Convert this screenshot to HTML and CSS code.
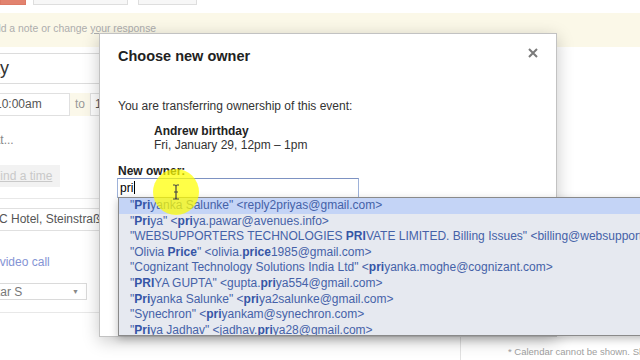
FILE: index.html
```html
<!DOCTYPE html>
<html>

<head>
    <title>Choose new owner</title>
    <link rel="stylesheet" href="styles.css">
</head>

<body>
    <div class="page">
        <div class="top-buttons">
            <span class="btn btn-red"></span>
            <span class="btn btn-save"></span>
            <span class="btn btn-more"></span>
        </div>

        <div class="notice">
            <span class="notice-text">Add a note or change <u>your response</u></span>
        </div>

        <div class="content">
            <div class="form-column">
                <div class="title-input">Andrew birthday</div>
                <div class="time-row">
                    <span class="time-input">10:00am</span>
                    <span class="time-to">to</span>
                    <span class="time-input">11:00am</span>
                </div>
                <div class="repeat">Repeat...</div>
                <div class="find-time">Find a time</div>
                <div class="divider"></div>
                <div class="location-input">ABC Hotel, Steinstraße 11, Düsseldorf</div>
                <div class="video-call">Add video call</div>
                <div class="calendar-select">
                    <span>Omkar S</span>
                    <span class="arrow">▼</span>
                </div>
                <div class="divider divider-bottom"></div>
            </div>

            <div class="calendar-column">
                <div class="calendar-note">* Calendar cannot be shown. Sharing settings do not allow it.</div>
            </div>
        </div>

        <!-- Transfer ownership dialog -->
        <div class="dialog">
            <h2 class="dialog-title">Choose new owner</h2>
            <span class="dialog-close">
                <svg width="10" height="10" viewBox="0 0 10 10">
                    <path d="M1 1 L9 9 M9 1 L1 9" stroke="#7a7a7a" stroke-width="2" />
                </svg>
            </span>

            <p class="intro">You are transferring ownership of this event:</p>
            <div class="event-info">
                <div class="event-name">Andrew birthday</div>
                <div>Fri, January 29, 12pm – 1pm</div>
            </div>

            <label class="owner-label" for="new-owner">New owner:</label>
            <div class="owner-input" id="new-owner">pri<span class="caret"></span></div>

            <div class="suggestions">
                <div class="suggestion selected">"<b>Pri</b>yanka Salunke" &lt;reply2priyas@gmail.com&gt;</div>
                <div class="suggestion">"<b>Pri</b>ya" &lt;<b>pri</b>ya.pawar@avenues.info&gt;</div>
                <div class="suggestion">"WEBSUPPORTERS TECHNOLOGIES <b>PRI</b>VATE LIMITED. Billing Issues" &lt;billing@websupporters.in&gt;</div>
                <div class="suggestion">"Olivia <b>Price</b>" &lt;olivia.<b>price</b>1985@gmail.com&gt;</div>
                <div class="suggestion">"Cognizant Technology Solutions India Ltd" &lt;<b>pri</b>yanka.moghe@cognizant.com&gt;</div>
                <div class="suggestion">"<b>PRI</b>YA GUPTA" &lt;gupta.<b>pri</b>ya554@gmail.com&gt;</div>
                <div class="suggestion">"<b>Pri</b>yanka Salunke" &lt;<b>pri</b>ya2salunke@gmail.com&gt;</div>
                <div class="suggestion">"Synechron" &lt;<b>pri</b>yankam@synechron.com&gt;</div>
                <div class="suggestion">"<b>Pri</b>ya Jadhav" &lt;jadhav.<b>pri</b>ya28@gmail.com&gt;</div>
            </div>
        </div>

        <!-- Highlighted mouse pointer -->
        <div class="cursor-spot">
            <svg width="8" height="16" viewBox="0 0 8 16">
                <path d="M1 1 H3 Q4 1 4 3 V13 Q4 15 3 15 H1 M7 1 H5 Q4 1 4 3 M4 13 Q4 15 5 15 H7 M2 8 H6" stroke="#444" stroke-width="1.2" fill="none" />
            </svg>
        </div>
    </div>
</body>

</html>
```

FILE: styles.css
```css
body {
    margin: 0;
    padding: 0;
    background: #fff;
    font-family: "Liberation Sans", Arial, sans-serif;
}

.page {
    position: relative;
    width: 640px;
    height: 360px;
    overflow: hidden;
    display: flex;
    flex-direction: column;
}

/* Background: event edit page */

.top-buttons {
    display: flex;
    height: 13px;
    flex-shrink: 0;
}

.btn {
    height: 5px;
    box-sizing: border-box;
    border: 1px solid #dedede;
    border-top: none;
    background: #f7f7f7;
}

.btn-red {
    width: 26px;
    background: #e2836f;
    border-color: #dd7a66;
}

.btn-save {
    width: 95px;
    margin-left: 7px;
}

.btn-more {
    width: 59px;
    margin-left: 10px;
}

.notice {
    height: 34px;
    flex-shrink: 0;
    background: #fbf8e8;
}

.notice-text {
    display: block;
    margin-left: -12px;
    padding-top: 10px;
    font-size: 10.4px;
    line-height: 12px;
    color: #adadad;
    white-space: nowrap;
}

.content {
    flex: 1;
    display: flex;
}

.form-column {
    width: 460px;
    flex-shrink: 0;
    font-size: 12px;
    color: #555;
}

.title-input {
    margin-top: 6px;
    margin-left: -130px;
    width: 560px;
    height: 31px;
    box-sizing: border-box;
    border: 1px solid #dcdcdc;
    padding-left: 8px;
    font-size: 18px;
    line-height: 29px;
    color: #333;
    white-space: nowrap;
}

.time-row {
    display: flex;
    margin-top: 9px;
    height: 23px;
}

.time-input {
    width: 80px;
    box-sizing: border-box;
    border: 1px solid #e0e0e0;
    padding-left: 4px;
    line-height: 21px;
}

.time-input:first-child {
    margin-left: -10px;
}

.time-to {
    padding: 0 5px 0 5px;
    line-height: 23px;
    background: #fbf8ea;
    color: #999;
}

.repeat {
    margin-top: 17px;
    margin-left: -35px;
    line-height: 14px;
    color: #888;
}

.find-time {
    width: fit-content;
    margin-top: 18px;
    margin-left: -15px;
    padding: 0 8px;
    height: 22px;
    line-height: 22px;
    background: #f2f2f2;
    color: #c9c9c9;
    text-decoration: underline;
}

.divider {
    margin-top: 11px;
    height: 1px;
    background: #e8e8e8;
}

.location-input {
    margin-top: 9px;
    margin-left: -20px;
    height: 23px;
    box-sizing: border-box;
    border: 1px solid #e0e0e0;
    padding-left: 2px;
    line-height: 21px;
    white-space: nowrap;
}

.video-call {
    margin-top: 24px;
    margin-left: -25px;
    line-height: 14px;
    color: #8494d4;
}

.calendar-select {
    display: flex;
    justify-content: space-between;
    align-items: center;
    margin-top: 14px;
    margin-left: -30px;
    width: 117px;
    height: 17px;
    box-sizing: border-box;
    border: 1px solid #dadada;
    padding: 0 7px 0 4px;
    color: #777;
}

.calendar-select .arrow {
    font-size: 7px;
    color: #888;
}

.divider-bottom {
    margin-top: 12px;
}

.calendar-column {
    flex: 1;
    display: flex;
    flex-direction: column;
    justify-content: flex-end;
    border-left: 1px solid #e2e2e2;
}

.calendar-note {
    padding: 0 0 2px 47px;
    font-size: 9.5px;
    line-height: 12px;
    color: #a0a0a0;
    white-space: nowrap;
}

/* Dialog */

.dialog {
    position: absolute;
    left: 99px;
    top: 33px;
    width: 458px;
    height: 304px;
    box-sizing: border-box;
    padding: 13px 18px 0;
    border: 1px solid #c2c2c2;
    background: #fff;
    box-shadow: 0 4px 16px rgba(0, 0, 0, 0.22);
    font-size: 12px;
    color: #333;
}

.dialog-title {
    margin: 0;
    font-size: 14.5px;
    line-height: 18px;
    font-weight: bold;
    color: #222;
}

.dialog-close {
    position: absolute;
    top: 14px;
    right: 18px;
    width: 10px;
    height: 10px;
}

.dialog-close svg {
    display: block;
}

.intro {
    margin: 33px 0 0;
    line-height: 16px;
}

.event-info {
    margin-top: 10px;
    margin-left: 36px;
    line-height: 14px;
}

.event-name {
    font-weight: bold;
    color: #222;
}

.owner-label {
    display: block;
    margin-top: 12px;
    line-height: 14px;
    font-weight: bold;
    color: #222;
}

.owner-input {
    margin-left: -1px;
    width: 242px;
    height: 20px;
    box-sizing: border-box;
    border: 1px solid #9eb2d9;
    border-top-color: #7d92c2;
    padding-left: 2px;
    line-height: 18px;
    color: #000;
}

.caret {
    display: inline-block;
    width: 1px;
    height: 13px;
    margin-left: 1px;
    vertical-align: -2px;
    background: #000;
}

.suggestions {
    position: absolute;
    left: 18px;
    top: 163px;
    width: 560px;
    height: 139px;
    box-sizing: border-box;
    overflow: hidden;
    border: 1px solid #8a8a8a;
    background: #e6e9f0;
    box-shadow: 0 3px 8px rgba(0, 0, 0, 0.25);
}

.suggestion {
    padding-left: 11px;
    line-height: 15.6px;
    color: #4562a8;
    white-space: nowrap;
}

.suggestion.selected {
    background: #c4d4f6;
}

.suggestion b {
    color: #3555a6;
}

/* Pointer highlight, drawn over everything */

.cursor-spot {
    position: absolute;
    left: 153px;
    top: 169px;
    width: 46px;
    height: 46px;
    border-radius: 50%;
    background: rgba(255, 255, 0, 0.72);
    display: flex;
    align-items: center;
    justify-content: center;
}

.cursor-spot svg {
    display: block;
}
```
